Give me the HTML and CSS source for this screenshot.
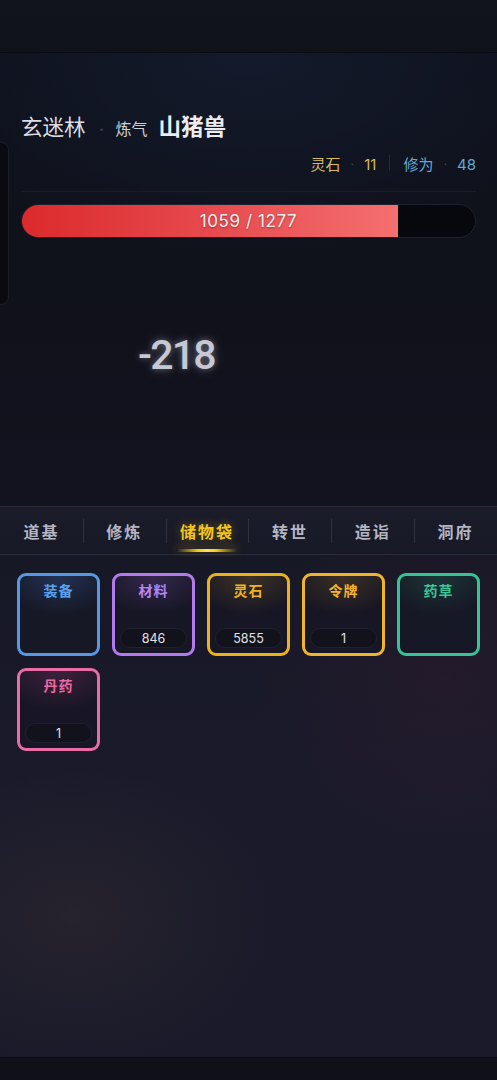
FILE: index.html
```html
<!DOCTYPE html>
<html lang="zh-CN">
<head>
  <meta charset="UTF-8">
  <meta name="viewport" content="width=device-width, initial-scale=1.0">
  <title>储物袋</title>
  <link rel="stylesheet" href="styles.css">
</head>
<body>
  <div class="app">
    <div class="topbar"></div>

    <div class="battle">
      <div class="side-drawer"></div>
      <div class="enemy-line">
        <span class="map-name">玄迷林</span>
        <span class="dot">·</span>
        <span class="realm">炼气</span>
        <span class="enemy-name">山猪兽</span>
      </div>
      <div class="stats">
        <span class="stat gold">灵石 <i>·</i> 11</span>
        <span class="stat-sep"></span>
        <span class="stat blue">修为 <i>·</i> 48</span>
      </div>
      <div class="hp-bar">
        <div class="hp-fill" style="width: 82.9%"></div>
        <div class="hp-text">1059 / 1277</div>
      </div>
      <div class="damage">-218</div>
    </div>

    <div class="tabs">
      <div class="tab">道基</div>
      <div class="tab">修炼</div>
      <div class="tab active">储物袋</div>
      <div class="tab">转世</div>
      <div class="tab">造诣</div>
      <div class="tab">洞府</div>
    </div>

    <div class="bag">
      <div class="slot blue">
        <div class="slot-name">装备</div>
      </div>
      <div class="slot purple">
        <div class="slot-name">材料</div>
        <div class="count">846</div>
      </div>
      <div class="slot gold">
        <div class="slot-name">灵石</div>
        <div class="count">5855</div>
      </div>
      <div class="slot amber">
        <div class="slot-name">令牌</div>
        <div class="count">1</div>
      </div>
      <div class="slot green">
        <div class="slot-name">药草</div>
      </div>
      <div class="slot pink">
        <div class="slot-name">丹药</div>
        <div class="count">1</div>
      </div>
    </div>

    <div class="bottombar"></div>
  </div>
</body>
</html>
```

FILE: styles.css
```css
*{
  box-sizing: border-box;
}
body{
  margin: 0;
  font-family: "Inter", "Noto Sans CJK SC", sans-serif;
  background-color: #111219;
  color: #e4e4ea;
}
.app{
  display: flex;
  flex-direction: column;
  height: 1080px;
  overflow: hidden;
}
.topbar{
  height: 53px;
  flex-shrink: 0;
  background: linear-gradient(180deg, #12141d 0%, #10121a 100%);
  border-bottom: 1px solid #0b0c12;
}

/* battle area */
.battle{
  position: relative;
  height: 453px;
  flex-shrink: 0;
  padding: 56px 21px 0 21px;
  background:
    radial-gradient(ellipse 70% 45% at 50% 0%, #141a2c 0%, rgba(20,26,44,0) 100%),
    linear-gradient(180deg, #0e111c 0%, #10111b 60%, #12131e 100%);
}
.side-drawer{
  position: absolute;
  left: -60px;
  top: 89px;
  width: 69px;
  height: 163px;
  border: 1px solid #1b1d27;
  border-radius: 8px;
  background-color: #0a0b10;
}
.enemy-line{
  display: flex;
  align-items: baseline;
  height: 34px;
  font-family: "Noto Sans CJK SC", sans-serif;
}
.map-name{
  font-size: 21.5px;
  color: #dcdce2;
}
.dot{
  font-size: 12px;
  color: #3c3f4c;
  margin: 0 8px 0 10px;
}
.realm{
  font-size: 16px;
  color: #cfd0d8;
  margin-right: 11px;
}
.enemy-name{
  font-size: 22.5px;
  font-weight: bold;
  color: #ececf0;
}
.stats{
  display: flex;
  justify-content: flex-end;
  align-items: center;
  margin-top: 7px;
  height: 26px;
  padding-bottom: 15px;
  border-bottom: 1px solid #1a1d2b;
  font-size: 15px;
  box-sizing: content-box;
}
.stat i{
  font-style: normal;
  font-size: 11px;
  color: #4a4d5a;
  margin: 0 6px;
  vertical-align: 2px;
}
.stat.gold{
  color: #d8bc5e;
}
.stat.blue{
  color: #62a8d6;
}
.stat-sep{
  width: 1px;
  height: 16px;
  background-color: #262938;
  margin: 0 13px;
}
.hp-bar{
  position: relative;
  margin-top: 12px;
  height: 34px;
  border-radius: 17px;
  border: 1px solid #1e2130;
  background-color: #07080d;
  overflow: hidden;
}
.hp-fill{
  height: 100%;
  background: linear-gradient(90deg, #dc2a2c 0%, #e64a4e 50%, #f56f6f 100%);
}
.hp-text{
  position: absolute;
  inset: 0;
  display: flex;
  align-items: center;
  justify-content: center;
  font-size: 17px;
  letter-spacing: 0.6px;
  color: #f4eeee;
  text-shadow: 0 1px 2px rgba(0,0,0,.35);
}
.damage{
  position: absolute;
  left: 138px;
  top: 278px;
  font-family: "Roboto", sans-serif;
  font-size: 41px;
  font-weight: 500;
  letter-spacing: -1.8px;
  color: #c6c8d4;
  text-shadow: 0 0 6px rgba(220,222,240,.4), 0 0 16px rgba(200,204,230,.2);
}

/* tabs */
.tabs{
  display: flex;
  height: 49px;
  flex-shrink: 0;
  background: linear-gradient(180deg, #1b1c2a 0%, #181926 100%);
  border-top: 1px solid #2a2c3b;
  border-bottom: 1px solid #2a2c3b;
}
.tab{
  position: relative;
  flex: 1;
  display: flex;
  align-items: center;
  justify-content: center;
  font-family: "Noto Sans CJK SC", sans-serif;
  font-size: 16px;
  font-weight: bold;
  letter-spacing: 2px;
  color: #b4b6c4;
}
.tab + .tab::before{
  content: "";
  position: absolute;
  left: 0;
  top: 12px;
  height: 24px;
  width: 1px;
  background-color: #30323f;
}
.tab.active{
  color: #f5c61a;
  text-shadow: 0 0 10px rgba(245,198,26,.35);
}
.tab.active::after{
  content: "";
  position: absolute;
  left: 10px;
  right: 10px;
  bottom: 2px;
  height: 3px;
  border-radius: 2px;
  background: linear-gradient(90deg, rgba(245,198,26,0) 0%, #f5c61a 35%, #ffe066 50%, #f5c61a 65%, rgba(245,198,26,0) 100%);
  box-shadow: 0 -2px 8px rgba(245,198,26,.35);
}

/* bag */
.bag{
  flex: 1;
  display: grid;
  grid-template-columns: repeat(5, 83px);
  grid-auto-rows: 83px;
  gap: 12px 12px;
  align-content: start;
  padding: 18px 17px;
  background:
    radial-gradient(ellipse 40% 30% at 15% 72%, rgba(60,50,50,.35) 0%, rgba(60,50,50,0) 100%),
    radial-gradient(ellipse 40% 35% at 90% 25%, rgba(60,30,50,.3) 0%, rgba(60,30,50,0) 100%),
    linear-gradient(180deg, #171826 0%, #1a1a2b 50%, #1a1a2a 100%);
}
.slot{
  position: relative;
  border: 3px solid;
  border-radius: 9px;
  display: flex;
  flex-direction: column;
  align-items: center;
  padding: 4px 5px 5px;
  background-color: #171826;
}
.slot-name{
  font-family: "Noto Sans CJK SC", sans-serif;
  font-size: 14px;
  font-weight: bold;
  letter-spacing: 1px;
}
.count{
  margin-top: auto;
  width: 100%;
  height: 20px;
  border-radius: 10px;
  background-color: #11121b;
  border: 1px solid #1f2130;
  font-size: 12.5px;
  color: #e2e2e8;
  display: flex;
  align-items: center;
  justify-content: center;
}
.slot.blue{
  border-color: #5599e6;
  background: radial-gradient(ellipse 75% 50% at 50% 0%, rgba(70,120,200,.28) 0%, rgba(70,120,200,0) 100%), #161826;
}
.slot.blue .slot-name{ color: #5aa2f0; }
.slot.purple{
  border-color: #b27aec;
  background: radial-gradient(ellipse 75% 50% at 50% 0%, rgba(150,100,210,.24) 0%, rgba(150,100,210,0) 100%), #161624;
}
.slot.purple .slot-name{ color: #b784ec; }
.slot.gold{
  border-color: #ecb21e;
  background: radial-gradient(ellipse 75% 50% at 50% 0%, rgba(200,150,40,.22) 0%, rgba(200,150,40,0) 100%), #171624;
}
.slot.gold .slot-name{ color: #f0b222; }
.slot.amber{
  border-color: #efb52c;
  background: radial-gradient(ellipse 75% 50% at 50% 0%, rgba(200,150,40,.2) 0%, rgba(200,150,40,0) 100%), #171624;
}
.slot.amber .slot-name{ color: #f2b42a; }
.slot.green{
  border-color: #36c496;
  background: radial-gradient(ellipse 75% 50% at 50% 0%, rgba(50,170,130,.2) 0%, rgba(50,170,130,0) 100%), #161825;
}
.slot.green .slot-name{ color: #3cc596; }
.slot.pink{
  border-color: #ea6ca6;
  background: radial-gradient(ellipse 75% 50% at 50% 0%, rgba(200,70,130,.22) 0%, rgba(200,70,130,0) 100%), #181626;
}
.slot.pink .slot-name{ color: #ec6aa2; }

.bottombar{
  height: 23px;
  flex-shrink: 0;
  background-color: #101118;
  border-top: 1px solid #0c0d13;
}
```
